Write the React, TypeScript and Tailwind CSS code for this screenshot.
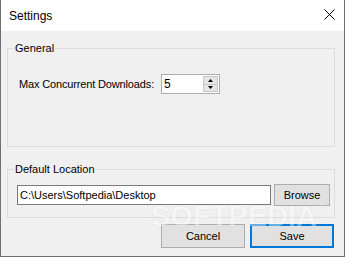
import React from "react";

const font = { fontFamily: '"Liberation Sans", Arial, sans-serif' };

function Group({ title, className, children }: { title: string; className: string; children: React.ReactNode }) {
  return (
    <div className={`relative border border-[#dcdcdc] ${className}`}>
      <span className="absolute left-[6px] top-[-8px] whitespace-nowrap bg-[#f0f0f0] px-[1px] text-[11px] leading-[14px] text-black">{title}</span>
      {children}
    </div>
  );
}

export default function App() {
  return (
    <div className="relative flex h-[257px] w-[345px] flex-col overflow-hidden border-x border-b border-[#707070] bg-[#f0f0f0] text-[11px] text-black" style={font}>
      <div className="flex h-[31px] shrink-0 items-center justify-between bg-white pl-[8px] pr-[9px]">
        <span className="text-[12px] leading-[16px]">Settings</span>
        <svg width="11" height="11" viewBox="0 0 11 11" className="mt-[-2px]">
          <path d="M0.5 0.5 L10.5 10.5 M10.5 0.5 L0.5 10.5" stroke="#000" strokeWidth="1" />
        </svg>
      </div>
      <div className="flex flex-col pl-[6px] pr-[9px] pt-[17px]">
        <Group title="General" className="h-[99px] pl-[11px] pt-[25px]">
          <div className="flex items-center">
            <span className="w-[142px] whitespace-nowrap leading-[14px] tracking-[-0.15px]">Max Concurrent Downloads:</span>
            <div className="flex h-[20px] w-[59px] items-stretch border border-[#adadad] bg-white">
              <span className="flex-1 pl-[2px] text-[12px] leading-[18px]">5</span>
              <div className="my-[1px] mr-[1px] flex w-[15px] flex-col">
                <div className="flex flex-1 items-center justify-center border border-[#c8c8c8] bg-[#e6e6e6]">
                  <svg width="5" height="3" viewBox="0 0 5 3"><path d="M2.5 0 L5 3 L0 3 Z" fill="#000" /></svg>
                </div>
                <div className="flex flex-1 items-center justify-center border border-t-0 border-[#c8c8c8] bg-[#e6e6e6]">
                  <svg width="5" height="3" viewBox="0 0 5 3"><path d="M0 0 L5 0 L2.5 3 Z" fill="#000" /></svg>
                </div>
              </div>
            </div>
          </div>
        </Group>
        <Group title="Default Location" className="mt-[22px] h-[49px] pl-[9px] pt-[14px]">
          <div className="flex items-center">
            <div className="flex h-[20px] w-[254px] items-center whitespace-nowrap border border-[#7a7a7a] bg-white pl-[2px] leading-[14px]">C:\Users\Softpedia\Desktop</div>
            <button className="ml-[3px] h-[22px] w-[56px] border border-[#adadad] bg-[#e1e1e1] text-[11px] leading-[14px]">Browse</button>
          </div>
        </Group>
        <div className="mt-[6px] flex justify-end gap-[5px] pr-[1px]">
          <button className="h-[24px] w-[84px] border border-[#adadad] bg-[#e1e1e1] text-[11px] leading-[14px]">Cancel</button>
          <button className="h-[24px] w-[84px] border-2 border-[#0078d7] bg-[#e1e1e1] text-[11px] leading-[14px]">Save</button>
        </div>
      </div>
      <div className="pointer-events-none absolute left-[150px] top-[200px] flex items-start whitespace-nowrap text-[29px] font-bold leading-[32px] text-white opacity-40" style={{ fontFamily: '"Liberation Sans", sans-serif', textShadow: "0 0 1px rgba(120,120,120,0.5)" }}>
        SOFTPEDIA<span className="ml-[1px] text-[9px] leading-[10px]">®</span>
      </div>
    </div>
  );
}
